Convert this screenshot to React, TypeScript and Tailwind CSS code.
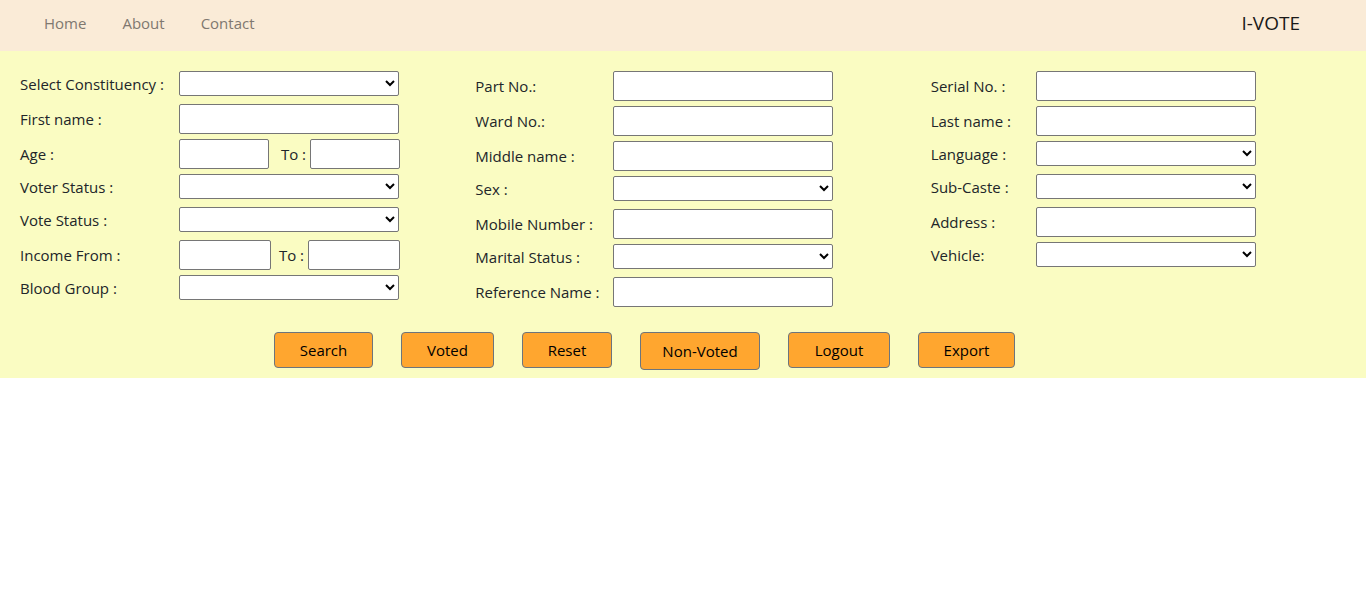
import React from "react";

type Field = {
  id: string;
  label: string;
  kind: "text" | "select" | "range" | "wideRange";
};

type Column = { labelWidth: string; fields: Field[] };

const columns: Column[] = [
  {
    labelWidth: "w-[159px]",
    fields: [
      { id: "constituency", label: "Select Constituency :", kind: "select" },
      { id: "first-name", label: "First name :", kind: "text" },
      { id: "age", label: "Age :", kind: "range" },
      { id: "voter-status", label: "Voter Status :", kind: "select" },
      { id: "vote-status", label: "Vote Status :", kind: "select" },
      { id: "income", label: "Income From :", kind: "wideRange" },
      { id: "blood-group", label: "Blood Group :", kind: "select" },
    ],
  },
  {
    labelWidth: "w-[138px]",
    fields: [
      { id: "part-no", label: "Part No.:", kind: "text" },
      { id: "ward-no", label: "Ward No.:", kind: "text" },
      { id: "middle-name", label: "Middle name :", kind: "text" },
      { id: "sex", label: "Sex :", kind: "select" },
      { id: "mobile", label: "Mobile Number :", kind: "text" },
      { id: "marital-status", label: "Marital Status :", kind: "select" },
      { id: "reference", label: "Reference Name :", kind: "text" },
    ],
  },
  {
    labelWidth: "w-[105px]",
    fields: [
      { id: "serial-no", label: "Serial No. :", kind: "text" },
      { id: "last-name", label: "Last name :", kind: "text" },
      { id: "language", label: "Language :", kind: "select" },
      { id: "sub-caste", label: "Sub-Caste :", kind: "select" },
      { id: "address", label: "Address :", kind: "text" },
      { id: "vehicle", label: "Vehicle:", kind: "select" },
    ],
  },
];

const actions = [
  { label: "Search", size: "h-9 w-[99px]" },
  { label: "Voted", size: "h-9 w-[93px]" },
  { label: "Reset", size: "h-9 w-[90px]" },
  { label: "Non-Voted", size: "h-[38px] w-[120px]" },
  { label: "Logout", size: "h-9 w-[102px]" },
  { label: "Export", size: "h-9 w-[97px]" },
];

const box = "rounded-[2px] border border-[#767676] bg-white";

function Control({ field }: { field: Field }) {
  if (field.kind === "select") {
    return (
      <select id={field.id} className={`${box} h-[25px] w-[220px] text-black`}>
        <option value=""></option>
      </select>
    );
  }
  if (field.kind === "text") {
    return <input id={field.id} type="text" className={`${box} h-[30px] w-[220px] px-1`} />;
  }
  const width = field.kind === "wideRange" ? "w-[92px]" : "w-[90px]";
  return (
    <div className="flex w-[221px] items-center">
      <input id={field.id} type="text" className={`${box} ${width} h-[30px] px-1`} />
      <label htmlFor={`${field.id}-to`} className="flex-1 pr-1 text-right whitespace-nowrap">
        To :
      </label>
      <input id={`${field.id}-to`} type="text" className={`${box} ${width} h-[30px] px-1`} />
    </div>
  );
}

export default function App() {
  return (
    <div className="font-['Open_Sans','Noto_Sans',sans-serif] text-[15px] leading-6 font-[390] text-[#212529]">
      <nav className="flex h-[51px] items-center justify-between bg-[#faebd7] pr-[66px] pb-[5px] pl-11">
        <div className="flex gap-9 text-[#7f7870]">
          <a href="#home">Home</a>
          <a href="#about">About</a>
          <a href="#contact">Contact</a>
        </div>
        <a href="#ivote" className="text-[19px] leading-7 text-[#1a1918]">
          I-VOTE
        </a>
      </nav>
      <form className="bg-[#fafcc2] pt-5 pb-2" onSubmit={(e) => e.preventDefault()}>
        <div className="grid grid-cols-3">
          {columns.map((column) => (
            <div key={column.labelWidth} className="pl-5">
              {column.fields.map((field) => (
                <div
                  key={field.id}
                  className={`flex items-center ${field.kind === "select" ? "mb-2" : "mb-[5px]"}`}
                >
                  <label htmlFor={field.id} className={`${column.labelWidth} shrink-0 whitespace-nowrap`}>
                    {field.label}
                  </label>
                  <Control field={field} />
                </div>
              ))}
            </div>
          ))}
        </div>
        <div className="mt-5 flex items-start gap-7 pl-[274px]">
          {actions.map((action) => (
            <button
              key={action.label}
              type="button"
              className={`${action.size} rounded border border-[#6c757d] bg-[#ffa62f] text-black`}
            >
              {action.label}
            </button>
          ))}
        </div>
      </form>
    </div>
  );
}
